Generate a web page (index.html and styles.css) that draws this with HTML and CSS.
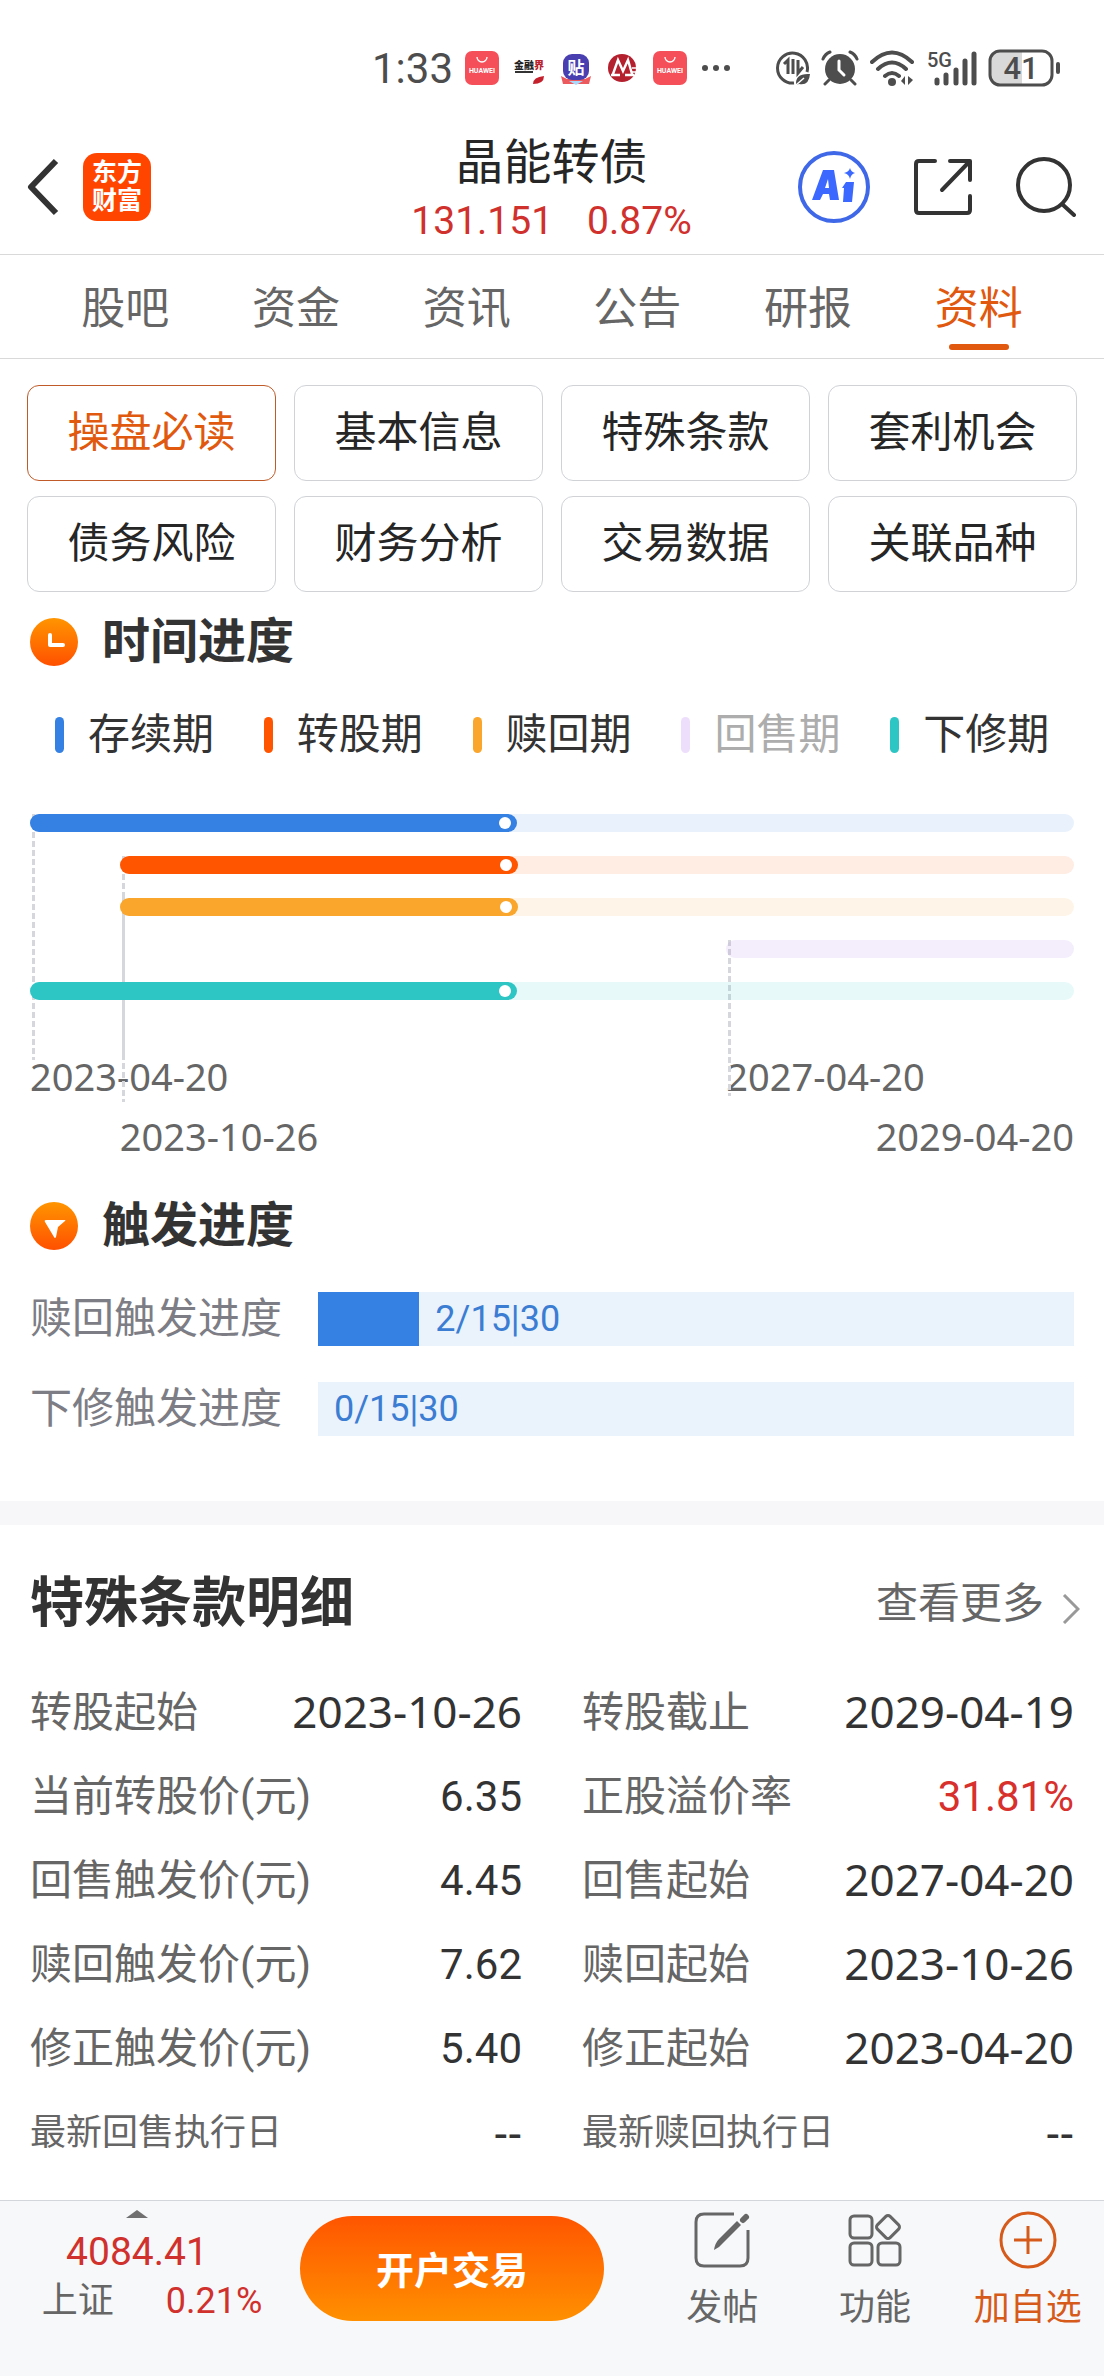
FILE: index.html
```
<!DOCTYPE html>
<html lang="zh-CN">
<head>
    <meta charset="UTF-8">
    <meta name="viewport" content="width=device-width, initial-scale=1.0">
    <title>晶能转债</title>
    <link rel="stylesheet" href="styles.css">
</head>
<body>
    <div class="app">
        <div class="status">
            <span class="time">1:33</span>
            <div class="status-apps">
                <svg width="34" height="34" viewBox="0 0 34 34">
                    <rect width="34" height="34" rx="7" fill="#f5505a"/>
                    <path d="M12 6a5 5 0 0 0 10 0" fill="none" stroke="#fff" stroke-width="1.3"/>
                    <text x="17" y="22" class="logo-huawei">HUAWEI</text>
                </svg>
                <svg width="30" height="34" viewBox="0 0 30 34">
                    <text x="0" y="18" class="logo-jrj">金融<tspan fill="#b8232f">界</tspan></text>
                    <path d="M1 21h18" stroke="#333" stroke-width="2"/>
                    <path d="M19 33q0-7 11-8q0 8-11 8z" fill="#c4202c"/>
                </svg>
                <svg width="34" height="34" viewBox="0 0 34 34">
                    <path d="M2 25l6 3h18l6-3-2 8H4z" fill="#ec5a5e"/>
                    <path d="M10 30h14l-7 4z" fill="#a9d8fa"/>
                    <rect x="4" y="3" width="26" height="26" rx="9" fill="#4a3fb0"/>
                    <text x="17" y="23" class="logo-tie">贴</text>
                </svg>
                <svg width="30" height="34" viewBox="0 0 30 34">
                    <circle cx="14" cy="17" r="14" fill="#b5202f"/>
                    <path d="M5 23L10 9l5 11 5-11 4 14M3 24h9M17 24h9" fill="none" stroke="#fff" stroke-width="2.4"/>
                    <path d="M24 17h6M24 21h6" stroke="#fff" stroke-width="1.5"/>
                </svg>
                <svg width="34" height="34" viewBox="0 0 34 34">
                    <rect width="34" height="34" rx="7" fill="#f5505a"/>
                    <path d="M12 6a5 5 0 0 0 10 0" fill="none" stroke="#fff" stroke-width="1.3"/>
                    <text x="17" y="22" class="logo-huawei">HUAWEI</text>
                </svg>
                <svg width="28" height="34" viewBox="0 0 28 34" fill="#4d4d4d">
                    <circle cx="3" cy="17" r="3"/>
                    <circle cx="14" cy="17" r="3"/>
                    <circle cx="25" cy="17" r="3"/>
                </svg>
            </div>
            <div class="status-system">
                <svg width="34" height="36" viewBox="0 0 34 36" fill="none" stroke="#4d4d4d" stroke-width="3">
                    <path d="M31 22A15 15 0 1 0 18 33"/>
                    <path d="M8 14l4-4v14M17 9v15M22 10v13l5-6" stroke-width="3"/>
                    <path d="M20 35q-1-12 14-11q-1 12-11 10" fill="#4d4d4d" stroke="none"/>
                    <path d="M20 35l8-7" stroke="#fff" stroke-width="1.5"/>
                </svg>
                <svg width="38" height="36" viewBox="0 0 38 36" fill="none" stroke="#4d4d4d" stroke-width="3" stroke-linecap="round">
                    <circle cx="19" cy="19" r="15" fill="#4d4d4d" stroke="none"/>
                    <path d="M2 9q2-5 7-7M36 9q-2-5-7-7M8 30l-4 4M30 30l4 4"/>
                    <path d="M18 11v9l5 5" stroke="#fff"/>
                </svg>
                <svg width="46" height="38" viewBox="0 0 46 38" fill="none" stroke="#4d4d4d" stroke-width="4" stroke-linecap="round">
                    <path d="M2 13q20-19 40 0M8 20q14-13 28 0M15 27q7-6 14 0"/>
                    <circle cx="22" cy="33" r="4" fill="#4d4d4d" stroke="none"/>
                    <path d="M35 27v9l-4-4zM38 27v9l5-5z" fill="#4d4d4d" stroke="none"/>
                </svg>
                <svg width="50" height="44" viewBox="0 0 50 44" stroke="#4d4d4d" stroke-width="5" stroke-linecap="round">
                    <text x="0" y="21" class="logo-5g">5G</text>
                    <path d="M10 34v3M19 29v8M29 24v13M38 15v22M47 8v29"/>
                </svg>
                <svg width="74" height="38" viewBox="0 0 74 38">
                    <rect x="2" y="2" width="30" height="34" rx="9" fill="#d9d9d9"/>
                    <path d="M26 2h8v34h-8z" fill="#d9d9d9"/>
                    <rect x="2" y="2" width="62" height="34" rx="10" fill="none" stroke="#4d4d4d" stroke-width="3"/>
                    <rect x="68" y="13" width="4" height="12" rx="2" fill="#4d4d4d"/>
                    <text x="33" y="30" class="battery-text">41</text>
                </svg>
            </div>
        </div>

        <header class="header">
            <div class="header-left">
                <button class="icon-btn" aria-label="返回">
                    <svg width="32" height="60" viewBox="0 0 32 60" fill="none" stroke="#333" stroke-width="6">
                        <path d="M29 4L4 30l25 26" stroke-linejoin="round"/>
                    </svg>
                </button>
                <div class="logo">东方<br>财富</div>
            </div>
            <div class="header-title">
                <h1>晶能转债</h1>
                <div class="price"><span>131.151</span><span>0.87%</span></div>
            </div>
            <div class="header-right">
                <button class="icon-btn" aria-label="AI">
                    <svg width="72" height="72" viewBox="0 0 72 72">
                        <circle cx="36" cy="36" r="34" fill="none" stroke="#3f68e8" stroke-width="4"/>
                        <path d="M25 19h11l5 30h-9l-1-6h-6l-3 6h-8zM30 28l-3 9h4zM48 31h8l-2 20h-9l1-14h-2z" fill="#3b68ff" fill-rule="evenodd"/>
                        <path d="M52 17q1 4 5 5-4 1-5 6-1-5-6-6 5-1 6-5z" fill="#3b68ff"/>
                    </svg>
                </button>
                <button class="icon-btn" aria-label="分享">
                    <svg width="60" height="60" viewBox="0 0 60 60" fill="none" stroke="#333" stroke-width="4" stroke-linecap="round" stroke-linejoin="round">
                        <path d="M22 4H6q-3 0-3 3v46q0 3 3 3h48q3 0 3-3V39M37 4h20v19M56 5L29 33"/>
                    </svg>
                </button>
                <button class="icon-btn" aria-label="搜索">
                    <svg width="60" height="60" viewBox="0 0 60 60" fill="none" stroke="#333" stroke-width="4" stroke-linecap="round">
                        <circle cx="28" cy="28" r="26"/>
                        <path d="M46 47l12 11"/>
                    </svg>
                </button>
            </div>
        </header>

        <nav class="tabs">
            <a href="#">股吧</a>
            <a href="#">资金</a>
            <a href="#">资讯</a>
            <a href="#">公告</a>
            <a href="#">研报</a>
            <a href="#" class="active">资料</a>
        </nav>

        <main class="main">
            <div class="chips">
                <button class="chip active">操盘必读</button>
                <button class="chip">基本信息</button>
                <button class="chip">特殊条款</button>
                <button class="chip">套利机会</button>
                <button class="chip">债务风险</button>
                <button class="chip">财务分析</button>
                <button class="chip">交易数据</button>
                <button class="chip">关联品种</button>
            </div>

            <section class="progress">
                <h2>
                    <svg width="48" height="48" viewBox="0 0 48 48">
                        <defs>
                            <linearGradient id="orange" x1="0" y1="0" x2="0" y2="1">
                                <stop offset="0" stop-color="#ff9500"/>
                                <stop offset="1" stop-color="#ff5000"/>
                            </linearGradient>
                        </defs>
                        <circle cx="24" cy="24" r="24" fill="url(#orange)"/>
                        <path d="M20 17v10h13" fill="none" stroke="#fff" stroke-width="4" stroke-linecap="round" stroke-linejoin="round"/>
                    </svg>
                    时间进度
                </h2>
                <ul class="legend">
                    <li class="blue">存续期</li>
                    <li class="red">转股期</li>
                    <li class="yellow">赎回期</li>
                    <li class="purple">回售期</li>
                    <li class="teal">下修期</li>
                </ul>
                <div class="timeline">
                    <i class="line long" style="left: 0%"></i>
                    <i class="line long row2" style="left: 8.6%"></i>
                    <i class="line row3" style="left: 8.6%"></i>
                    <i class="line row4" style="left: 66.7%"></i>
                    <div class="bar blue"><span style="width: 46.6%"></span></div>
                    <div class="bar red" style="margin-left: 8.6%"><span style="width: 41.7%"></span></div>
                    <div class="bar yellow" style="margin-left: 8.6%"><span style="width: 41.7%"></span></div>
                    <div class="bar purple" style="margin-left: 66.7%"></div>
                    <div class="bar teal"><span style="width: 46.6%"></span></div>
                    <div class="dates">
                        <span>2023-04-20</span>
                        <span>2027-04-20</span>
                    </div>
                    <div class="dates second">
                        <span>2023-10-26</span>
                        <span>2029-04-20</span>
                    </div>
                </div>

                <h2>
                    <svg width="48" height="48" viewBox="0 0 48 48">
                        <circle cx="24" cy="24" r="24" fill="url(#orange)"/>
                        <path d="M16 18h19q1 0 0 1l-7 6-2 10q-1 2-2 0l-9-15q-1-2 1-2z" fill="#fff"/>
                    </svg>
                    触发进度
                </h2>
                <div class="trigger">
                    <span class="trigger-name">赎回触发进度</span>
                    <div class="trigger-bar"><i style="width: 13.4%"></i><span>2/15|30</span></div>
                </div>
                <div class="trigger">
                    <span class="trigger-name">下修触发进度</span>
                    <div class="trigger-bar"><i style="width: 0%"></i><span>0/15|30</span></div>
                </div>
            </section>

            <section class="details">
                <div class="details-head">
                    <h3>特殊条款明细</h3>
                    <a href="#">查看更多
                        <svg width="18" height="30" viewBox="0 0 18 30" fill="none" stroke="#999" stroke-width="3">
                            <path d="M2 1l14 14L2 29"/>
                        </svg>
                    </a>
                </div>
                <dl class="terms">
                    <div><dt>转股起始</dt><dd class="date">2023-10-26</dd></div>
                    <div><dt>转股截止</dt><dd class="date">2029-04-19</dd></div>
                    <div><dt>当前转股价(元)</dt><dd>6.35</dd></div>
                    <div><dt>正股溢价率</dt><dd class="up">31.81%</dd></div>
                    <div><dt>回售触发价(元)</dt><dd>4.45</dd></div>
                    <div><dt>回售起始</dt><dd class="date">2027-04-20</dd></div>
                    <div><dt>赎回触发价(元)</dt><dd>7.62</dd></div>
                    <div><dt>赎回起始</dt><dd class="date">2023-10-26</dd></div>
                    <div><dt>修正触发价(元)</dt><dd>5.40</dd></div>
                    <div><dt>修正起始</dt><dd class="date">2023-04-20</dd></div>
                    <div><dt class="small">最新回售执行日</dt><dd class="date">--</dd></div>
                    <div><dt class="small">最新赎回执行日</dt><dd class="date">--</dd></div>
                </dl>
            </section>
        </main>

        <footer class="footer">
            <div class="index">
                <svg width="22" height="8" viewBox="0 0 22 8"><path d="M0 8L11 0l11 8z" fill="#707070"/></svg>
                <div class="index-value">4084.41</div>
                <div class="index-row"><span>上证</span><span class="index-rate">0.21%</span></div>
            </div>
            <button class="trade">开户交易</button>
            <div class="actions">
                <button class="action">
                    <svg width="58" height="58" viewBox="0 0 58 58" fill="none" stroke="#666" stroke-width="3">
                        <path d="M41 3H11q-8 0-8 8v36q0 8 8 8h36q8 0 8-8V19"/>
                        <path d="M21 39q1-7 5-11l18-18 4 4-18 18q-4 5-9 7z" fill="#666" stroke="none"/>
                        <path d="M50 9l3-3" stroke-width="6" stroke-linecap="round"/>
                    </svg>
                    发帖
                </button>
                <button class="action">
                    <svg width="58" height="58" viewBox="0 0 58 58" fill="none" stroke="#666" stroke-width="3">
                        <rect x="4" y="5" width="22" height="22" rx="4"/>
                        <rect x="4" y="32" width="22" height="22" rx="4"/>
                        <rect x="32" y="32" width="22" height="22" rx="4"/>
                        <rect x="33" y="7" width="18" height="18" rx="3" transform="rotate(45 42 16)"/>
                    </svg>
                    功能
                </button>
                <button class="action add">
                    <svg width="58" height="58" viewBox="0 0 58 58" fill="none" stroke="#d65a1a" stroke-width="3">
                        <circle cx="29" cy="29" r="27"/>
                        <path d="M29 15v28M15 29h28"/>
                    </svg>
                    加自选
                </button>
            </div>
        </footer>
    </div>
</body>
</html>
```
FILE: styles.css
```
* {
    box-sizing: border-box;
}
body {
    margin: 0;
    background-color: #fff;
    color: #333;
    font-family: Roboto, "Noto Sans CJK SC", sans-serif;
    font-size: 42px;
}
h1, h2, h3, ul, dl, dd {
    margin: 0;
    padding: 0;
}
a {
    color: inherit;
    text-decoration: none;
}
button {
    padding: 0;
    border: none;
    background: none;
    color: inherit;
    font: inherit;
    cursor: pointer;
}
svg {
    display: block;
    flex: none;
}
.app {
    display: flex;
    flex-direction: column;
    min-height: 100vh;
}

/* status bar */
.status {
    display: flex;
    justify-content: flex-end;
    align-items: center;
    height: 120px;
    padding: 16px 42px 0 0;
    color: #4d4d4d;
}
.time {
    font-size: 42px;
}
.status-apps {
    display: flex;
    gap: 15px;
    margin: 0 46px 0 12px;
}
.status-system {
    display: flex;
    align-items: center;
    gap: 11px;
}
.logo-huawei {
    fill: #fff;
    font-size: 7px;
    font-weight: 700;
    text-anchor: middle;
}
.logo-jrj {
    fill: #222;
    font-size: 10px;
    font-weight: 900;
}
.logo-tie {
    fill: #fff;
    font-size: 17px;
    font-weight: 700;
    text-anchor: middle;
}
.logo-5g {
    fill: #4d4d4d;
    stroke: none;
    font-size: 20px;
    font-weight: 500;
}
.battery-text {
    fill: #4d4d4d;
    font-size: 31px;
    font-weight: 500;
    text-anchor: middle;
}

/* header */
.header {
    display: grid;
    grid-template-columns: 1fr auto 1fr;
    align-items: center;
    height: 135px;
    padding: 0 28px 0 27px;
    border-bottom: 1px solid #d9d9d9;
}
.header-left {
    display: flex;
    align-items: center;
    gap: 24px;
}
.logo {
    width: 68px;
    height: 68px;
    padding-top: 6px;
    border-radius: 14px;
    background-color: #ff4500;
    color: #fff;
    font-size: 25px;
    line-height: 28px;
    font-weight: 700;
    text-align: center;
}
.header-title {
    padding-top: 10px;
    text-align: center;
}
.header-title h1 {
    color: #262626;
    font-size: 48px;
    line-height: 59px;
    font-weight: 400;
}
.price {
    display: flex;
    justify-content: center;
    gap: 34px;
    color: #d0312d;
    font-size: 39px;
    line-height: 59px;
}
.header-right {
    display: flex;
    justify-content: flex-end;
    align-items: center;
    gap: 43px;
}

/* tabs */
.tabs {
    display: flex;
    height: 104px;
    padding: 0 40px;
    border-bottom: 1px solid #d9d9d9;
    color: #666;
    font-size: 44px;
    line-height: 108px;
}
.tabs a {
    position: relative;
    flex: 1;
    height: 103px;
    text-align: center;
}
.tabs .active {
    color: #e0590f;
}
.tabs .active::after {
    content: '';
    position: absolute;
    left: 50%;
    bottom: 8px;
    width: 60px;
    height: 6px;
    margin-left: -30px;
    border-radius: 3px;
    background-color: #e0590f;
}

/* content */
.main {
    flex: 1;
    padding-top: 26px;
}
.chips {
    display: grid;
    grid-template-columns: repeat(4, 1fr);
    gap: 15px 18px;
    padding: 0 27px;
}
.chip {
    height: 96px;
    padding-bottom: 10px;
    border: 1px solid #d0d2d6;
    border-radius: 12px;
    color: #262626;
}
.chip.active {
    border-color: #c05a28;
    color: #e0590f;
}
.progress {
    padding: 0 30px 65px;
    border-bottom: 24px solid #f7f7fa;
}
.progress h2 {
    display: flex;
    align-items: center;
    gap: 24px;
    padding-top: 20px;
    font-size: 48px;
    line-height: 60px;
}
.legend {
    display: grid;
    grid-template-columns: repeat(5, 1fr);
    margin-top: 33px;
    list-style: none;
    line-height: 60px;
}
.legend li {
    display: flex;
    align-items: center;
    gap: 24px;
    padding-left: 25px;
}
.legend li::before {
    content: '';
    width: 9px;
    height: 36px;
    border-radius: 5px;
    background-color: var(--color);
}
.blue {
    --color: #3480e3;
    --track: rgba(52, 128, 227, 0.11);
}
.red {
    --color: #ff5500;
    --track: rgba(255, 85, 0, 0.11);
}
.yellow {
    --color: #faa52b;
    --track: rgba(250, 165, 43, 0.11);
}
.purple {
    --color: #eddffb;
    --track: rgba(150, 90, 230, 0.1);
}
.teal {
    --color: #2ec6c5;
    --track: rgba(46, 198, 197, 0.11);
}
.legend .purple {
    color: #adadad;
}

/* timeline */
.timeline {
    position: relative;
    margin: 49px 0 10px;
}
.bar {
    position: relative;
    height: 18px;
    margin-bottom: 24px;
    border-radius: 9px;
    background-color: var(--track);
}
.bar span {
    display: flex;
    justify-content: flex-end;
    align-items: center;
    height: 18px;
    padding-right: 6px;
    border-radius: 9px;
    background-color: var(--color);
}
.bar span::after {
    content: '';
    width: 12px;
    height: 12px;
    border-radius: 50%;
    background-color: #fff;
}
.line {
    position: absolute;
    top: 0;
    width: 3px;
    height: 156px;
    margin-left: 2px;
    background: repeating-linear-gradient(#d6d7dc 0 6px, transparent 6px 9px);
}
.line.long {
    height: 246px;
}
.line.row2 {
    top: 42px;
}
.line.row3 {
    top: 84px;
}
.line.row4 {
    top: 126px;
}
.dates {
    display: grid;
    grid-template-columns: 66.7% 1fr;
    padding-top: 22px;
    color: #666;
    font-family: "Noto Sans", sans-serif;
    font-size: 38px;
    line-height: 60px;
}
.dates.second {
    display: flex;
    justify-content: space-between;
    padding: 0 0 0 8.6%;
}

/* trigger progress */
.trigger {
    display: flex;
    align-items: center;
    gap: 36px;
    margin-top: 36px;
    color: #7d7d85;
    line-height: 54px;
}
.trigger-bar {
    flex: 1;
    display: flex;
    gap: 16px;
    height: 54px;
    background-color: #eaf2fc;
    color: #3b7dd3;
    font-size: 36px;
}
.trigger-bar i {
    background-color: #3480e3;
}

/* details */
.details {
    padding: 43px 24px 0 30px;
}
.details-head {
    display: flex;
    justify-content: space-between;
    align-items: center;
    margin-bottom: 31px;
    line-height: 72px;
}
.details-head h3 {
    font-size: 54px;
}
.details-head a {
    display: flex;
    align-items: center;
    gap: 18px;
    color: #666;
}
.details-head svg {
    margin-top: 10px;
}
.terms {
    display: grid;
    grid-template-columns: 1fr 1fr;
    column-gap: 60px;
    padding-right: 6px;
    line-height: 84px;
}
.terms div {
    display: flex;
    justify-content: space-between;
    height: 84px;
    white-space: nowrap;
}
.terms dt {
    color: #666;
}
.terms .small {
    font-size: 36px;
}
.terms .date {
    font-family: "Noto Sans", sans-serif;
    font-size: 44px;
    line-height: 80px;
}
.terms .up {
    color: #d8302d;
}

/* bottom bar */
.footer {
    display: flex;
    height: 176px;
    border-top: 1px solid #d3d6db;
    background-color: #f7f8fa;
    color: #666;
    font-size: 36px;
}
.index {
    display: flex;
    flex-direction: column;
    align-items: center;
    width: 274px;
    padding-top: 9px;
}
.index-value {
    margin-top: 9px;
    color: #d0312d;
    font-size: 39px;
    line-height: 50px;
}
.index-row {
    display: flex;
    gap: 52px;
    padding-left: 30px;
    line-height: 48px;
}
.index-rate {
    color: #d0312d;
}
.trade {
    flex: 1;
    height: 105px;
    margin: 15px 42px 0 26px;
    padding-bottom: 3px;
    border-radius: 53px;
    background: linear-gradient(#ff5500, #ff9000);
    color: #fff;
    font-size: 38px;
    font-weight: 700;
}
.actions {
    display: flex;
    width: 458px;
}
.action {
    display: flex;
    flex: 1;
    flex-direction: column;
    align-items: center;
    gap: 14px;
    padding-top: 10px;
    line-height: 50px;
}
.action.add {
    color: #d65a1a;
}
```
